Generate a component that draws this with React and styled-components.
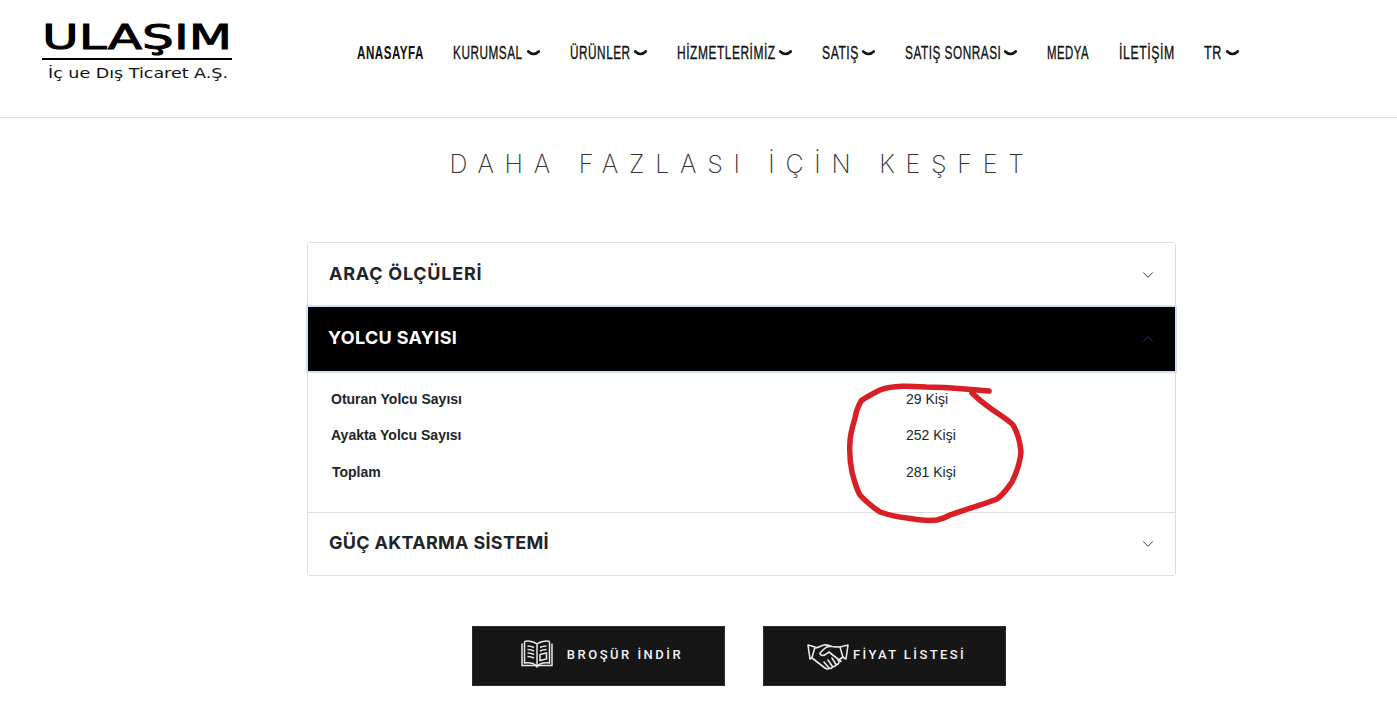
import React from "react";
import styled, { createGlobalStyle } from "styled-components";

// w = width in the screenshot, sx = squeeze of the font to get the condensed look
const navItems = [
  { label: "ANASAYFA", w: 66, sx: 0.645, active: true },
  { label: "KURUMSAL", w: 70, sx: 0.655, drop: true },
  { label: "ÜRÜNLER", w: 60, sx: 0.655, drop: true },
  { label: "HİZMETLERİMİZ", w: 98, sx: 0.665, drop: true },
  { label: "SATIŞ", w: 36, sx: 0.675, drop: true },
  { label: "SATIŞ SONRASI", w: 95, sx: 0.655, drop: true },
  { label: "MEDYA", w: 42, sx: 0.63 },
  { label: "İLETİŞİM", w: 55, sx: 0.685 },
  { label: "TR", w: 18, sx: 0.7, drop: true },
];

const rows = [
  { name: "Oturan Yolcu Sayısı", value: "29 Kişi" },
  { name: "Ayakta Yolcu Sayısı", value: "252 Kişi" },
  { name: "Toplam", value: "281 Kişi", nudge: true },
];

const Logo = () => (
  <LogoSvg width="192" height="64" viewBox="0 0 192 64">
    <text x="1" y="29" fontFamily="DejaVu Sans" fontWeight="400" fontSize="34" textLength="190" lengthAdjust="spacingAndGlyphs" fill="#000" stroke="#000" strokeWidth="0.9">
      ULAŞIM
    </text>
    <rect x="1" y="38" width="190" height="2" fill="#000" />
    <text x="7" y="58" fontFamily="DejaVu Sans" fontWeight="400" fontSize="14" textLength="180" lengthAdjust="spacingAndGlyphs" fill="#111">
      İç ue Dış Ticaret A.Ş.
    </text>
  </LogoSvg>
);

const NavChevron = () => (
  <svg width="13" height="7" viewBox="0 0 13 7">
    <path d="M1.2 1.5 Q6.500 6.500 11.800 1.500" fill="none" stroke="#111" strokeWidth="2.6" strokeLinecap="round" />
  </svg>
);

const AccChevron = ({ up, color }) => (
  <svg width="12" height="12" viewBox="0 0 16 16" style={{ transform: up ? "rotate(180deg)" : "none" }}>
    <path d="M1.6 4.6 8 11l6.4-6.4" fill="none" stroke={color} strokeWidth="1.3" />
  </svg>
);

const BookIcon = () => (
  <svg width="36" height="30" viewBox="0 0 36 30" fill="none" stroke="#e8e8e8" strokeWidth="1.5">
    <path d="M3 4.500v22h13c1 0 1.500 1 2 1.500 .5-.5 1-1.500 2-1.500h13v-22" />
    <path d="M5.500 2.500v21.500c4-.5 9 0 12.500 3 3.500-3 8.500-3.500 12.500-3V2.500" />
    <path d="M18 5v22M18 5C15 2.500 9.500 1.500 5.500 2.500M18 5c3-2.500 8.500-3.500 12.500-2.500" />
    <path d="M8.500 7c2 0 4.500.5 6.500 1.500M8.500 10.500c2 0 4.500.5 6.500 1.500M8.500 14c2 0 4.500.5 6.500 1.500M8.500 17.500c2 0 4.500.5 6.500 1.500M21 8.500c2-1 4-1.500 6.500-1.500M21 12c2-1 4-1.500 6.500-1.500" />
    <path d="M21 15.500l6.500-1.500v6l-6.500 1.500z" />
  </svg>
);

const HandshakeIcon = () => (
  <HandshakeSvg width="42" height="28" viewBox="0 0 42 28" fill="none" stroke="#e8e8e8" strokeWidth="1.6" strokeLinejoin="round" strokeLinecap="round">
    <path d="M1 3l7 2-3 10.500-2 1.500z" />
    <path d="M41 3l-8 2 3 10.500 3 1.500z" />
    <path d="M8 6c3 0 6-2.500 9-3 3-.5 6 1 8 1.500 3 .5 5 .5 8 .5" />
    <path d="M24 4.500c-3-.5-5 .5-7 2.500l-4 4c-.5 1 1 2.500 3 2.500 2 0 4-2 6-3.500l12 9.500" />
    <path d="M5 16l13 10c2 1.500 4 1 4 0 1.500 1 3.500 0 3.500-1.500 1.500.5 3.500-.5 3.500-2 1.500.5 3.500-1 3-3l-1-1L36 15" />
    <path d="M17 20l5 6M21 18l4.500 6.500M25 16l4 6.500" />
  </HandshakeSvg>
);

const Scribble = () => (
  <ScribbleSvg viewBox="843 380 185 147">
    <path
      d="M989 391 C970 390 950 387 926 387 C910 386 893 385 880 390 C872 394 866 397 861 401 C857 408 856 412 855 418 C852 428 850 435 850 442 C849 455 850 462 852 472 C855 484 857 490 860 495 C867 503 873 507 880 512 C889 515 897 517 907 518 C917 520 928 521 937 520 C942 519 946 517 950 515 C966 509 982 505 997 499 C1003 495 1007 489 1012 482 C1017 472 1020 462 1021 452 C1020 441 1018 433 1013 425 C1006 418 998 414 990 408 C983 403 977 398 972 393"
      fill="none"
      stroke="#d91f26"
      strokeWidth="5.500"
      strokeLinecap="round"
      strokeLinejoin="round"
    />
  </ScribbleSvg>
);

export default function App() {
  return (
    <Page>
      <GlobalStyle />
      <Header>
        <LogoBox>
          <Logo />
        </LogoBox>
        <Nav>
          {navItems.map((v) => (
            <NavItem key={v.label}>
              <NavLabel $w={v.w} $sx={v.sx} $active={v.active}>
                {v.label}
              </NavLabel>
              {v.drop && <NavChevron />}
            </NavItem>
          ))}
        </Nav>
      </Header>

      <Title>DAHA FAZLASI İÇİN KEŞFET</Title>

      <Accordion>
        <AccHeader>
          <AccTitle $ls={0.75} $ml={1}>ARAÇ ÖLÇÜLERİ</AccTitle>
          <AccChevron color="#333" />
        </AccHeader>
        <AccHeader $open>
          <AccTitle $ls={0.33}>YOLCU SAYISI</AccTitle>
          <AccChevron up color="#1a3c7a" />
        </AccHeader>
        <AccBody>
          {rows.map((r) => (
            <Row key={r.name}>
              <RowName $nudge={r.nudge}>{r.name}</RowName>
              <RowValue>{r.value}</RowValue>
            </Row>
          ))}
          <Scribble />
        </AccBody>
        <AccHeader $last>
          <AccTitle $ls={0.3} $ml={1}>GÜÇ AKTARMA SİSTEMİ</AccTitle>
          <AccChevron color="#333" />
        </AccHeader>
      </Accordion>

      <Buttons>
        <DarkButton $w={253} $pl={5}>
          <BookIcon />
          <ButtonText $ml={12} $ls={2.5}>BROŞÜR İNDİR</ButtonText>
        </DarkButton>
        <DarkButton $w={243} $pl={4}>
          <HandshakeIcon />
          <ButtonText $ml={4} $ls={2.4}>FİYAT LİSTESİ</ButtonText>
        </DarkButton>
      </Buttons>
    </Page>
  );
}

const GlobalStyle = createGlobalStyle`
  html, body {
    margin: 0;
    padding: 0;
    background: #fff;
  }
`;

const Page = styled.div`
  width: 1397px;
  height: 727px;
  overflow: hidden;
  font-family: "Liberation Sans", Arial, sans-serif;
`;

const Header = styled.header`
  display: flex;
  align-items: flex-start;
  height: 117px;
  padding-left: 41px;
  border-bottom: 1px solid #dcdcdc;
`;

const LogoBox = styled.div`
  width: 316px;
  padding-top: 20px;
`;

const LogoSvg = styled.svg`
  display: block;
  overflow: visible;
`;

const Nav = styled.nav`
  display: flex;
  gap: 30px;
  padding-top: 42px;
`;

const NavItem = styled.a`
  display: flex;
  align-items: center;
  gap: 4px;
  height: 22px;
`;

const NavLabel = styled.span`
  display: inline-block;
  width: ${(p) => p.$w}px;
  white-space: nowrap;
  transform: scaleX(${(p) => p.$sx});
  transform-origin: left center;
  font-size: 18px;
  letter-spacing: 0.8px;
  font-weight: ${(p) => (p.$active ? 700 : 400)};
  -webkit-text-stroke: ${(p) => (p.$active ? 0 : 0.35)}px #111;
  color: #111;
`;

const Title = styled.h2`
  margin: 30px 0 0;
  height: 94px;
  text-align: center;
  padding-left: 87px;
  font-family: Inter, sans-serif;
  font-size: 25px;
  line-height: 32px;
  font-weight: 200;
  letter-spacing: 10.750px;
  color: #333;
`;

const Accordion = styled.section`
  width: 869px;
  margin-left: 307px;
  border: 1px solid #dedede;
  border-radius: 3px;
  box-sizing: border-box;
`;

const AccHeader = styled.div`
  position: relative;
  display: flex;
  align-items: center;
  justify-content: space-between;
  box-sizing: border-box;
  height: ${(p) => (p.$last ? 63 : 64)}px;
  padding: 0 21px 0 20px;
  background: ${(p) => (p.$open ? "#000" : "#fff")};
  color: ${(p) => (p.$open ? "#fff" : "#212529")};
  box-shadow: ${(p) => (p.$open ? "0 0 0 2px #d2def6" : "none")};
  border-top: ${(p) => (p.$last ? "1px solid #dedede" : "none")};
`;

const AccTitle = styled.span`
  margin-left: ${(p) => p.$ml || 0}px;
  margin-top: -4px;
  font-family: Inter, sans-serif;
  font-size: 18px;
  font-weight: 700;
  letter-spacing: ${(p) => p.$ls}px;
`;

const AccBody = styled.div`
  position: relative;
  box-sizing: border-box;
  height: 141px;
  padding: 9.500px 0 0 23px;
`;

const Row = styled.div`
  display: grid;
  grid-template-columns: 575px 1fr;
  height: 36.500px;
  align-items: center;
  font-size: 14px;
  color: #212529;
`;

const RowName = styled.span`
  font-weight: 700;
  padding-left: ${(p) => (p.$nudge ? 1 : 0)}px;
`;

const RowValue = styled.span`
  font-weight: 400;
`;

const ScribbleSvg = styled.svg`
  position: absolute;
  z-index: 2;
  left: 535px;
  top: 9px;
  width: 185px;
  height: 147px;
  pointer-events: none;
`;

const HandshakeSvg = styled.svg`
  margin-top: 3px;
`;

const Buttons = styled.div`
  display: flex;
  gap: 38px;
  margin: 50px 0 0 472px;
`;

const DarkButton = styled.a`
  display: flex;
  align-items: center;
  justify-content: center;
  box-sizing: border-box;
  width: ${(p) => p.$w}px;
  height: 60px;
  padding: 0 0 4px ${(p) => p.$pl}px;
  background: #161616;
  border: 1px solid #2e2e2e;
`;

const ButtonText = styled.span`
  margin-left: ${(p) => p.$ml}px;
  font-family: Roboto, sans-serif;
  font-size: 13px;
  font-weight: 500;
  letter-spacing: ${(p) => p.$ls}px;
  color: #f2f2f2;
`;
